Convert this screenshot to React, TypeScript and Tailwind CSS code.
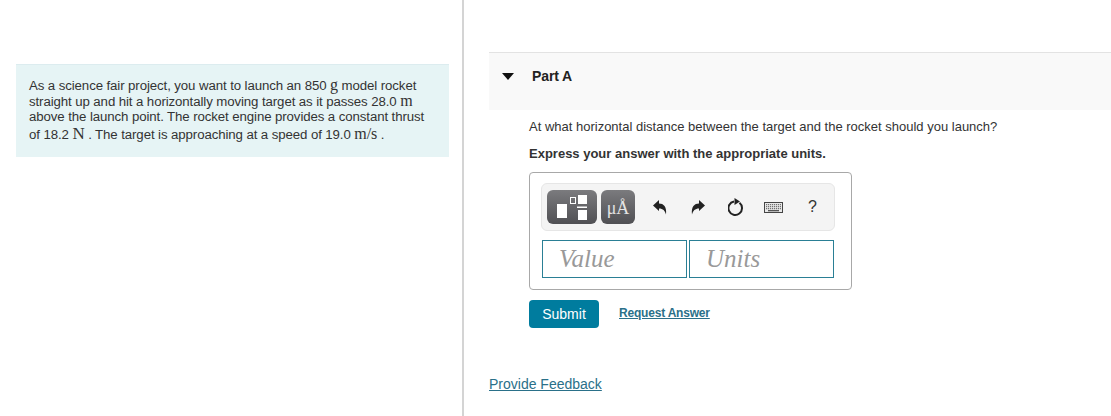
import { useState } from 'react';

const sans = "font-['Liberation_Sans',Arial,sans-serif]";
const serif = "font-['Liberation_Serif','Times_New_Roman',serif]";

function MathText({ children, big }: { children: string; big?: boolean }) {
  return <span className={`${serif} ${big ? 'text-[17px]' : 'text-[16px]'} leading-[16px] text-[#333]`}>{children}</span>;
}

function ProblemText() {
  return (
    <div className="mt-16 ml-4 mr-[13px] h-[93px] border-t border-[#dcecef] bg-[#e6f4f5] pl-[13px] pt-[12px] text-[13.25px] leading-4 tracking-[-0.1px] text-[#333]">
      <p className="h-4 whitespace-nowrap">
        As a science fair project, you want to launch an 850 <MathText>g</MathText> model rocket
      </p>
      <p className="h-4 whitespace-nowrap">
        straight up and hit a horizontally moving target as it passes 28.0 <MathText>m</MathText>
      </p>
      <p className="h-4 whitespace-nowrap">above the launch point. The rocket engine provides a constant thrust</p>
      <p className="mt-px h-4 whitespace-nowrap">
        of 18.2 <MathText big>N</MathText> . The target is approaching at a speed of 19.0 <MathText>m/s</MathText> .
      </p>
    </div>
  );
}

function TemplatesIcon() {
  return (
    <svg width="30" height="25" viewBox="0 0 30 25" fill="none">
      <rect x="0" y="9" width="10" height="14" fill="#fff" />
      <rect x="13.5" y="2.5" width="5" height="6" stroke="#fff" />
      <rect x="21" y="0" width="9" height="9" fill="#fff" />
      <rect x="20" y="11.5" width="10" height="1.5" fill="#fff" />
      <rect x="21" y="15" width="9" height="10" fill="#fff" />
    </svg>
  );
}

function UndoIcon({ flip }: { flip?: boolean }) {
  return (
    <svg width="14" height="15" viewBox="0 0 14 15" className={flip ? '-scale-x-100' : ''}>
      <path
        d="M0 5.5 L6 0 V3.4 C10.5 3.4 14 6.5 13 14.5 C12 10.5 10 8.4 6 8.4 V11 Z"
        fill="#222"
      />
    </svg>
  );
}

function ResetIcon() {
  return (
    <svg width="16" height="18" viewBox="0 0 16 18" fill="none">
      <path d="M6 3.4 A6.8 6.8 0 1 0 11.5 4.8" stroke="#222" strokeWidth="2" />
      <path d="M6.5 0 L12 3.4 L6.5 7 Z" fill="#222" />
    </svg>
  );
}

function KeyboardIcon() {
  return (
    <svg width="19" height="11" viewBox="0 0 19 11" fill="none">
      <rect x="0.5" y="0.5" width="18" height="10" fill="#e8e8e8" stroke="#444" />
      <path d="M2 2.7 H17 M2 4.7 H17 M2 6.7 H17" stroke="#555" strokeDasharray="1.2 0.8" />
      <path d="M4 8.7 H15" stroke="#444" strokeWidth="1.2" />
    </svg>
  );
}

function AnswerBox() {
  const [value, setValue] = useState('');
  const [units, setUnits] = useState('');

  return (
    <div className="mt-[10px] ml-10 h-[118px] w-[323px] rounded border border-[#a8a8a8] pl-[11px] pt-[10px]">
      {/* Toolbar */}
      <div className="flex h-[48px] w-[294px] items-center rounded-md border border-[#e6e6e6] bg-[#f4f4f4] pl-[5px]">
        <button type="button" className="flex h-[34px] w-[50px] items-center justify-center rounded-md bg-gradient-to-b from-[#7b7b7e] to-[#505054]">
          <TemplatesIcon />
        </button>
        <button type="button" className={`${serif} ml-[4px] flex h-[34px] w-[34px] items-center justify-center rounded-md bg-gradient-to-b from-[#7b7b7e] to-[#505054] pt-[3px] text-[18px] text-[#e4e4e4]`}>
          μÅ
        </button>
        <span className="ml-[18px] flex"><UndoIcon /></span>
        <span className="ml-[24px] flex"><UndoIcon flip /></span>
        <span className="ml-[23px] flex"><ResetIcon /></span>
        <span className="ml-[20px] flex"><KeyboardIcon /></span>
        <span className="ml-[25px] text-[16px] text-[#333]">?</span>
      </div>
      {/* Inputs */}
      <div className="mt-[9px] ml-px flex gap-[2px]">
        <input
          value={value}
          onChange={(e) => setValue(e.target.value)}
          placeholder="Value"
          className={`${serif} h-[38px] w-[145px] border border-[#2a7f95] pl-4 text-[25px] italic outline-none placeholder:text-[#999]`}
        />
        <input
          value={units}
          onChange={(e) => setUnits(e.target.value)}
          placeholder="Units"
          className={`${serif} h-[38px] w-[145px] border border-[#2a7f95] pl-4 text-[25px] italic outline-none placeholder:text-[#999]`}
        />
      </div>
    </div>
  );
}

function PartA() {
  return (
    <div className="mt-[52px] ml-[25px]">
      <div className="flex h-[58px] items-start border-t border-[#e3e3e3] bg-[#f9f9f9] pt-[15px]">
        <svg width="12" height="7" viewBox="0 0 12 7" className="ml-[13px] mt-[5px]">
          <path d="M0 0 H12 L6 7 Z" fill="#111" />
        </svg>
        <h2 className="ml-[18px] text-[14px] font-bold leading-4 tracking-[-0.1px] text-[#222]">Part A</h2>
      </div>
      <p className="mt-[9px] ml-10 text-[13px] leading-4 text-[#333]">
        At what horizontal distance between the target and the rocket should you launch?
      </p>
      <p className="mt-[11px] ml-10 text-[13px] font-bold leading-4 text-[#333]">
        Express your answer with the appropriate units.
      </p>
      <AnswerBox />
      <div className="mt-[10px] ml-10 flex items-start">
        <button type="button" className="h-[28px] w-[70px] rounded-sm bg-[#007c9e] text-[14px] text-white">
          Submit
        </button>
        <a href="#" className="ml-5 mt-[5px] text-[12px] font-bold leading-4 tracking-[-0.2px] text-[#2a7089] underline">
          Request Answer
        </a>
      </div>
      <a href="#" className="mt-[48px] block w-fit text-[14px] leading-4 text-[#2a7089] underline">
        Provide Feedback
      </a>
    </div>
  );
}

export default function App() {
  return (
    <div className={`${sans} flex h-[416px] w-[1111px] overflow-hidden bg-white`}>
      <div className="w-[464px] shrink-0 border-r-2 border-[#d4d4d4]">
        <ProblemText />
      </div>
      <div className="min-w-0 flex-1">
        <PartA />
      </div>
    </div>
  );
}
